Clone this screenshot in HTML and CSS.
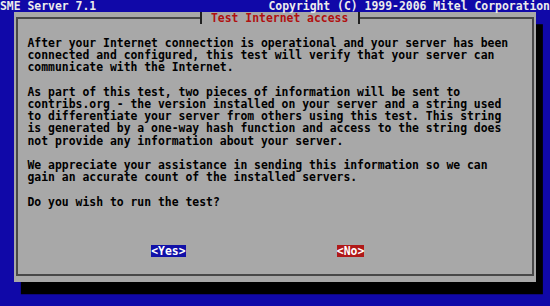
FILE: index.html
```html
<!DOCTYPE html>
<html lang="en">
<head>
    <meta charset="UTF-8">
    <meta name="viewport" content="width=device-width, initial-scale=1.0">
    <title>SME Server 7.1 - Test Internet access</title>
    <link rel="stylesheet" href="styles.css">
</head>
<body>
    <div class="screen">
        <div class="backtitle">
            <span>SME Server 7.1</span>
            <span>Copyright (C) 1999-2006 Mitel Corporation</span>
        </div>

        <div class="dialog">
            <fieldset class="frame">
                <legend class="title">Test Internet access</legend>

                <p>After your Internet connection is operational and your server has been<br>
                connected and configured, this test will verify that your server can<br>
                communicate with the Internet.</p>

                <p>As part of this test, two pieces of information will be sent to<br>
                contribs.org - the version installed on your server and a string used<br>
                to differentiate your server from others using this test. This string<br>
                is generated by a one-way hash function and access to the string does<br>
                not provide any information about your server.</p>

                <p>We appreciate your assistance in sending this information so we can<br>
                gain an accurate count of the installed servers.</p>

                <p>Do you wish to run the test?</p>

                <div class="buttons">
                    <span class="btn btn-yes">&lt;Yes&gt;</span>
                    <span class="btn btn-no">&lt;No&gt;</span>
                </div>
            </fieldset>
        </div>
    </div>
</body>
</html>
```

FILE: styles.css
```css
:root {
    --cw: 6.875px;
    --rh: 12.24px;
    --blue: #1008a8;
    --gray: #a8a8a8;
    --line: #484848;
}
html, body {
    margin: 0;
    padding: 0;
    background: var(--blue);
}
.screen {
    width: calc(80 * var(--cw));
    height: calc(25 * var(--rh));
    font-family: 'DejaVu Sans Mono', 'Liberation Mono', monospace;
    font-size: 11.42px;
    font-weight: bold;
    line-height: var(--rh);
    white-space: nowrap;
    overflow: hidden;
}
.backtitle {
    display: flex;
    justify-content: space-between;
    height: var(--rh);
    color: #ececec;
}
.dialog {
    display: flex;
    box-sizing: border-box;
    margin-left: calc(2 * var(--cw));
    width: calc(76 * var(--cw));
    height: calc(22 * var(--rh));
    padding: 0 calc(var(--cw) / 2 - 1px) calc(var(--rh) / 2 - 1px);
    background: var(--gray);
    box-shadow: var(--cw) var(--rh) 0 #000;
    color: #000;
}
.frame {
    flex: 1;
    margin: 0;
    min-width: 0;
    border: 2px solid var(--line);
    padding: var(--rh) 0 0 calc(1.5 * var(--cw) - 1px);
}
.title {
    margin: 0 auto;
    height: var(--rh);
    padding: 0 calc(1.5 * var(--cw) - 1px);
    border-left: 2px solid #202020;
    border-right: 2px solid #202020;
    color: #b01010;
}
.frame p {
    margin: 0 0 var(--rh);
}
.buttons {
    display: flex;
    gap: calc(22 * var(--cw));
    margin-top: calc(3 * var(--rh));
    padding-left: calc(18 * var(--cw));
}
.btn {
    color: #fff;
}
.btn-yes {
    background: #1010a8;
}
.btn-no {
    background: #b01818;
}
```
